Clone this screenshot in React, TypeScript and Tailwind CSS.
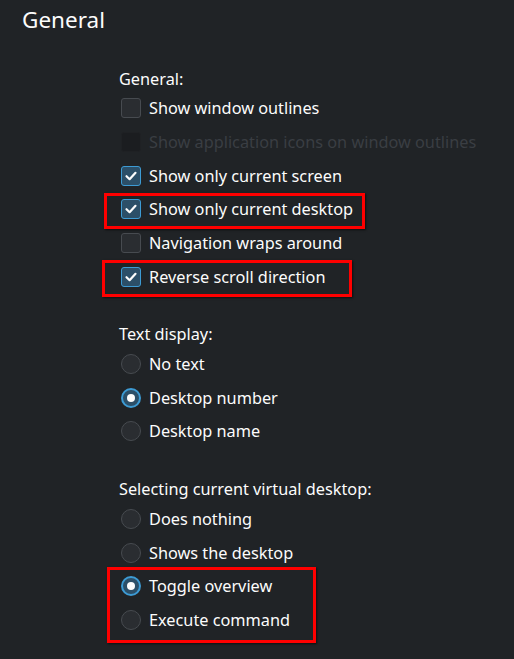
import type { ReactNode } from "react";

function CheckBox({ checked, disabled }: { checked?: boolean; disabled?: boolean }) {
  if (disabled) {
    return <div className="w-5 h-5 rounded-[3px] bg-[#1b1d20] border border-[#1f2124] shrink-0" />;
  }
  if (!checked) {
    return <div className="w-5 h-5 rounded-[3px] bg-[#2a2d31] border border-[#474b50] shrink-0" />;
  }
  return (
    <div className="w-5 h-5 rounded-[3px] bg-[#2c4f68] border border-[#3d9bd4] shrink-0 flex items-center justify-center">
      <svg width="14" height="14" viewBox="0 0 14 14" fill="none">
        <path d="M2.5 7.2 L5.6 10.2 L11.5 3.8" stroke="#fcfcfc" strokeWidth="2.2" strokeLinecap="round" strokeLinejoin="round" />
      </svg>
    </div>
  );
}

function Radio({ checked }: { checked?: boolean }) {
  if (!checked) {
    return <div className="w-5 h-5 rounded-full bg-[#2a2d31] border border-[#474b50] shrink-0" />;
  }
  return (
    <div className="w-5 h-5 rounded-full bg-[#2c4f68] border-2 border-[#3d9bd4] shrink-0 flex items-center justify-center">
      <div className="w-2 h-2 rounded-full bg-[#fcfcfc]" />
    </div>
  );
}

function Row({ control, label, disabled, children }: { control: ReactNode; label: string; disabled?: boolean; children?: ReactNode }) {
  return (
    <div className="relative h-[33.7px] flex items-center gap-2 pl-[2px]">
      {control}
      <span className={disabled ? "text-[#3a3e43]" : "text-[#fcfcfc]"}>{label}</span>
      {children}
    </div>
  );
}

function Mark({ className }: { className: string }) {
  return <span className={"absolute border-[3px] border-[#ff0000] shadow-[1px_1px_2px_rgba(0,0,0,0.6)] pointer-events-none " + className} />;
}

export default function App() {
  return (
    <div
      className="w-[514px] h-[659px] overflow-hidden bg-[#202326] text-[#fcfcfc] text-[16.3px] leading-[22px]"
      style={{ fontFamily: '"Noto Sans", "Open Sans", sans-serif' }}
    >
      <div className="pt-[4px] pl-[22px] text-[22.5px] leading-[32px]">General</div>

      <div className="pl-[119px] mt-[31.5px]">
        <div className="h-[24px]">General:</div>
        <Row control={<CheckBox />} label="Show window outlines" />
        <Row control={<CheckBox disabled />} label="Show application icons on window outlines" disabled />
        <Row control={<CheckBox checked />} label="Show only current screen" />
        <Row control={<CheckBox checked />} label="Show only current desktop">
          <Mark className="left-[-15px] top-0 w-[261px] h-[36px]" />
        </Row>
        <Row control={<CheckBox />} label="Navigation wraps around" />
        <Row control={<CheckBox checked />} label="Reverse scroll direction">
          <Mark className="left-[-17px] top-0 w-[250px] h-[37px]" />
        </Row>

        <div className="h-[24px] mt-[29.5px]">Text display:</div>
        <Row control={<Radio />} label="No text" />
        <Row control={<Radio checked />} label="Desktop number" />
        <Row control={<Radio />} label="Desktop name" />

        <div className="h-[24px] mt-[30px]">Selecting current virtual desktop:</div>
        <Row control={<Radio />} label="Does nothing" />
        <Row control={<Radio />} label="Shows the desktop" />
        <div className="relative">
          <Row control={<Radio checked />} label="Toggle overview" />
          <Row control={<Radio />} label="Execute command" />
          <Mark className="left-[-12px] top-[-3px] w-[209px] h-[76px]" />
        </div>
      </div>
    </div>
  );
}
